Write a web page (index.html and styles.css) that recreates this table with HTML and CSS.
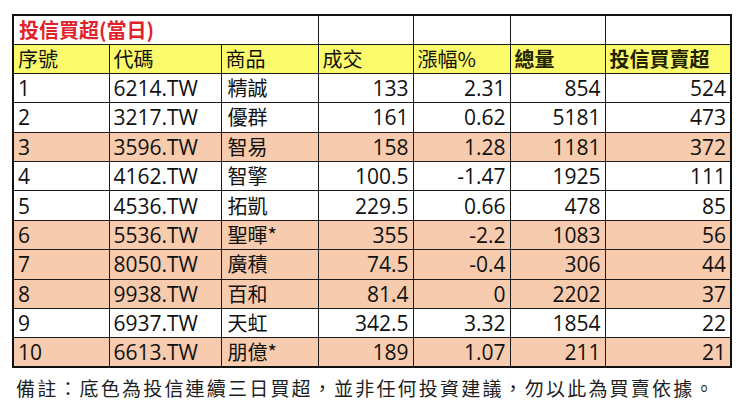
FILE: index.html
```html
<!DOCTYPE html>
<html lang="zh-Hant">
<head>
<meta charset="utf-8">
<title>投信買超(當日)</title>
<link rel="stylesheet" href="styles.css">
</head>
<body>
<table class="sheet">
  <colgroup>
    <col class="c1"><col class="c2"><col class="c3"><col class="c4"><col class="c5"><col class="c6"><col class="c7">
  </colgroup>
  <tr class="title-row">
    <td colspan="3" class="title">投信買超(當日)</td>
    <td></td><td></td><td></td><td></td>
  </tr>
  <tr class="head">
    <td>序號</td><td>代碼</td><td>商品</td><td>成交</td><td>漲幅%</td><td class="strong">總量</td><td class="strong">投信買賣超</td>
  </tr>
  <tr><td>1</td><td>6214.TW</td><td class="name">精誠</td><td class="n">133</td><td class="n">2.31</td><td class="n">854</td><td class="n">524</td></tr>
  <tr><td>2</td><td>3217.TW</td><td class="name">優群</td><td class="n">161</td><td class="n">0.62</td><td class="n">5181</td><td class="n">473</td></tr>
  <tr class="hl"><td>3</td><td>3596.TW</td><td class="name">智易</td><td class="n">158</td><td class="n">1.28</td><td class="n">1181</td><td class="n">372</td></tr>
  <tr><td>4</td><td>4162.TW</td><td class="name">智擎</td><td class="n">100.5</td><td class="n">-1.47</td><td class="n">1925</td><td class="n">111</td></tr>
  <tr><td>5</td><td>4536.TW</td><td class="name">拓凱</td><td class="n">229.5</td><td class="n">0.66</td><td class="n">478</td><td class="n">85</td></tr>
  <tr class="hl"><td>6</td><td>5536.TW</td><td class="name">聖暉*</td><td class="n">355</td><td class="n">-2.2</td><td class="n">1083</td><td class="n">56</td></tr>
  <tr class="hl"><td>7</td><td>8050.TW</td><td class="name">廣積</td><td class="n">74.5</td><td class="n">-0.4</td><td class="n">306</td><td class="n">44</td></tr>
  <tr class="hl"><td>8</td><td>9938.TW</td><td class="name">百和</td><td class="n">81.4</td><td class="n">0</td><td class="n">2202</td><td class="n">37</td></tr>
  <tr><td>9</td><td>6937.TW</td><td class="name">天虹</td><td class="n">342.5</td><td class="n">3.32</td><td class="n">1854</td><td class="n">22</td></tr>
  <tr class="hl last"><td>10</td><td>6613.TW</td><td class="name">朋億*</td><td class="n">189</td><td class="n">1.07</td><td class="n">211</td><td class="n">21</td></tr>
</table>
<p class="note">備註：底色為投信連續三日買超，並非任何投資建議，勿以此為買賣依據。</p>
</body>
</html>
```

FILE: styles.css
```css
html, body {
  margin: 0;
  padding: 0;
  background: #ffffff;
}

body {
  width: 740px;
  height: 410px;
  overflow: hidden;
  font-family: "Open Sans", "Noto Sans CJK TC", sans-serif;
  color: #111111;
}

.sheet {
  margin: 14px 0 0 12px;
  width: 718px;
  border-collapse: collapse;
  table-layout: fixed;
  border: 2px solid #111111;
  font-size: 21px;
}

.c1 { width: 96px; }
.c2 { width: 112px; }
.c3 { width: 97px; }
.c4 { width: 95px; }
.c5 { width: 97px; }
.c6 { width: 95px; }
.c7 { width: 126px; }

.sheet tr {
  height: 29.4px;
}

.sheet td {
  border: 1px solid #1a1a1a;
  padding: 0 4px 0 4px;
  vertical-align: middle;
  line-height: 20px;
  white-space: nowrap;
  overflow: hidden;
  font-family: "Open Sans", "Noto Sans CJK TC", sans-serif;
  font-weight: 400;
}

.sheet .name {
  font-family: "Noto Sans CJK TC", sans-serif;
  font-size: 20px;
  padding-left: 6px;
}

.sheet .title-row {
  height: 29px;
}

.sheet .title {
  color: #e3212b;
  font-family: "Noto Sans CJK TC", sans-serif;
  font-size: 20px;
  font-weight: 700;
  padding-left: 5px;
}

.sheet .head td {
  background: #fbfb6c;
  font-family: "Noto Sans CJK TC", sans-serif;
  font-size: 20px;
}

.sheet .head .strong {
  font-weight: 700;
  color: #222200;
}

.sheet .n {
  text-align: right;
  padding-right: 4px;
}

.sheet .hl td {
  background: #f7cbad;
}

.sheet .last td {
  border-bottom: 2px solid #111111;
}

.note {
  margin: 8px 0 0 16px;
  font-family: "Noto Sans CJK TC", sans-serif;
  font-size: 19px;
  letter-spacing: 2.2px;
  line-height: 24px;
  color: #1e1e1e;
}
```
